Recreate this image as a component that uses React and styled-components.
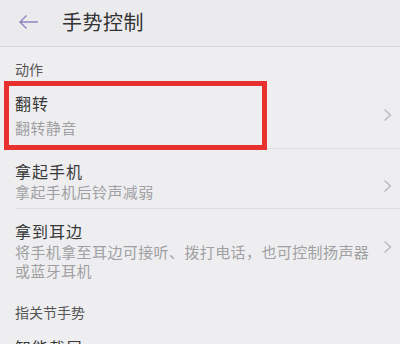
import styled, { createGlobalStyle } from 'styled-components';

const GlobalStyle = createGlobalStyle`
  * { box-sizing: border-box; }
  body {
    margin: 0;
    background: #eeeef0;
    font-family: "Noto Sans CJK SC", "Noto Sans", sans-serif;
  }
`;

const Page = styled.div`
  width: 400px;
  height: 344px;
  overflow: hidden;
  background: #eeeef0;
`;

const Header = styled.header`
  height: 47px;
  display: flex;
  align-items: center;
  gap: 23px;
  padding-left: 18px;
  padding-bottom: 3px;
  background: #ebebed;
  border-bottom: 1px solid #dadadc;
`;

const BackButton = styled.div`
  display: flex;
  align-items: center;
  color: #8a86c2;
`;

const Title = styled.h1`
  margin: 0;
  font-size: 20px;
  font-weight: 400;
  letter-spacing: 0.5px;
  color: #333;
`;

const Section = styled.div`
  padding: ${p => p.top}px 15px 4px;
  font-size: 14px;
  line-height: 20px;
  color: #555;
`;

const Row = styled.div`
  position: relative;
  display: flex;
  align-items: center;
  justify-content: space-between;
  padding: ${p => p.pad};
  margin: 0 0 0 15px;
  padding-right: 8px;
  border-bottom: ${p => (p.last ? 'none' : '1px solid #dcdcde')};
`;

const RowText = styled.div`
  display: flex;
  flex-direction: column;
  flex-shrink: 0;
  gap: ${p => p.gap || 0}px;
  width: 356px;
`;

const RowTitle = styled.div`
  font-size: 16px;
  line-height: 22px;
  letter-spacing: 1px;
  color: #383838;
`;

const RowSub = styled.div`
  font-size: 15px;
  line-height: 19px;
  letter-spacing: 0.4px;
  color: #a0a0a2;
`;

const Chevron = styled.div`
  display: flex;
  color: #b8b8ba;
  margin-top: ${p => p.offset || 0}px;
`;

const Highlight = styled.div`
  position: absolute;
  left: -11px;
  top: -2px;
  width: 263px;
  height: 69px;
  border: 5px solid #e8302e;
  pointer-events: none;
`;

function ChevronIcon() {
  return (
    <svg width="9" height="14" viewBox="0 0 9 14" fill="none">
      <path d="M1.5 1.5 L7.5 7 L1.5 12.5" stroke="currentColor" strokeWidth="1.3" />
    </svg>
  );
}

const items = [
  { title: '翻转', sub: '翻转静音', pad: '9px 0 11px', gap: 4, highlight: true, offset: 0 },
  { title: '拿起手机', sub: '拿起手机后铃声减弱', pad: '11px 0 7px', offset: 10 },
  { title: '拿到耳边', sub: '将手机拿至耳边可接听、拨打电话，也可控制扬声器或蓝牙耳机', pad: '11px 0 10px', last: true, offset: -6 },
];

export default function App() {
  return (
    <>
      <GlobalStyle />
      <Page>
        <Header>
          <BackButton>
            <svg width="21" height="16" viewBox="0 0 21 16" fill="none">
              <path d="M20 8 H2 M8.5 1.5 L2 8 L8.5 14.5" stroke="currentColor" strokeWidth="1.4" />
            </svg>
          </BackButton>
          <Title>手势控制</Title>
        </Header>

        <Section top={12}>动作</Section>
        {items.map(item => (
          <Row key={item.title} pad={item.pad} last={item.last}>
            <RowText gap={item.gap}>
              <RowTitle>{item.title}</RowTitle>
              <RowSub>{item.sub}</RowSub>
            </RowText>
            <Chevron offset={item.offset}>
              <ChevronIcon />
            </Chevron>
            {item.highlight && <Highlight />}
          </Row>
        ))}

        <Section top={12}>指关节手势</Section>
        <Row pad="10px 0 10px" last>
          <RowText>
            <RowTitle>智能截屏</RowTitle>
          </RowText>
        </Row>
      </Page>
    </>
  );
}
